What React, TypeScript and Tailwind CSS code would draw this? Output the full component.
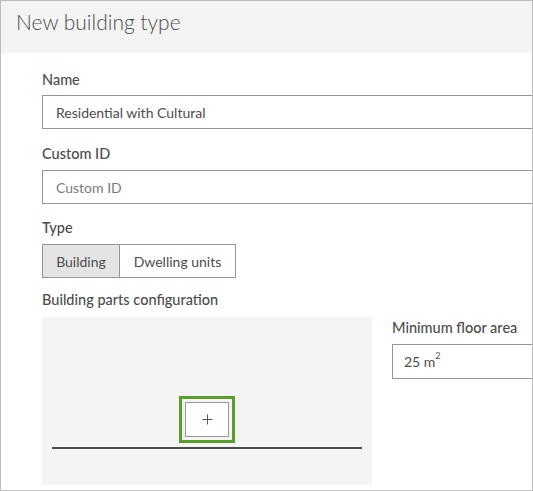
export default function App() {
  return (
    <div className="w-[533px] h-[491px] border border-[#bdbdbd] overflow-hidden bg-white text-[#4c4c4c] font-['Lato',sans-serif]">
      <div className="h-[52px] bg-[#f4f4f4] pl-[15px] pt-[6px]">
        <div className="text-[21px] leading-[30px] font-light">New building type</div>
      </div>

      <div className="pl-[41px] pt-[17px]">
        <div className="text-[14.5px] leading-[20px] font-medium">Name</div>
        <div className="mt-[5px] w-[520px] h-[34px] border border-[#959595] flex items-center pl-[13px] text-[14px]">
          Residential with Cultural
        </div>

        <div className="mt-[15px] text-[14.5px] leading-[20px] font-medium">Custom ID</div>
        <div className="mt-[6px] w-[520px] h-[34px] border border-[#959595] flex items-center pl-[13px] text-[14px] text-[#7a7a7a]">
          Custom ID
        </div>

        <div className="mt-[14px] text-[14.5px] leading-[20px] font-medium">Type</div>
        <div className="mt-[6px] flex w-fit h-[34px] border border-[#959595] text-[14px]">
          <div className="w-[77px] bg-[#e4e4e4] border-r border-[#959595] flex items-center justify-center">Building</div>
          <div className="w-[115px] flex items-center justify-center">Dwelling units</div>
        </div>

        <div className="mt-[12px] text-[14.5px] leading-[20px] font-medium">Building parts configuration</div>
        <div className="mt-[7px] flex gap-[20px]">
          <div className="w-[330px] h-[168px] shrink-0 bg-[#f4f4f4] flex flex-col items-center pt-[79px]">
            <div className="border-[3px] border-[#5b9f2a] p-[3px]">
              <div className="w-[44px] h-[35px] bg-white border border-[#999999] flex items-center justify-center">
                <svg width="11" height="11" viewBox="0 0 11 11">
                  <path d="M5.5 0.5v10M0.5 5.5h10" stroke="#555" strokeWidth="1" />
                </svg>
              </div>
            </div>
            <div className="mt-[4px] w-[310px] h-[2px] bg-[#4c4c4c]" />
          </div>
          <div className="w-[200px] shrink-0 pt-[1px]">
            <div className="text-[14.5px] leading-[20px] font-medium">Minimum floor area</div>
            <div className="mt-[6px] w-[200px] h-[35px] border border-[#959595] flex items-center pl-[11px] text-[14px]">
              25 m<sup className="text-[9px] -top-[6px]">2</sup>
            </div>
          </div>
        </div>
      </div>
    </div>
  );
}
